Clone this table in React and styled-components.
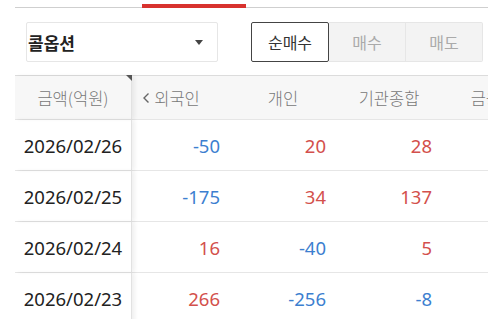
import React from 'react';
import styled, { createGlobalStyle } from 'styled-components';

const GlobalStyle = createGlobalStyle`
  html, body {
    margin: 0;
    padding: 0;
    background: #fff;
    overflow: hidden;
  }
  body {
    font-family: "Noto Sans", "Noto Sans CJK KR", sans-serif;
  }
`;

const Page = styled.div`
  width: 488px;
  height: 319px;
  overflow: hidden;
`;

const TabLine = styled.div`
  position: relative;
  margin-left: 15px;
  height: 7px;
  border-bottom: 1px solid #cfcfcf;
`;

const TabIndicator = styled.div`
  position: absolute;
  left: 127px;
  bottom: -1px;
  width: 104px;
  height: 4px;
  background: #d8322e;
`;

const Controls = styled.div`
  display: flex;
  align-items: center;
  padding: 14px 4px 0 26px;
  height: 40px;
`;

const Select = styled.div`
  box-sizing: border-box;
  width: 192px;
  height: 40px;
  display: flex;
  align-items: center;
  justify-content: space-between;
  padding: 0 14px 0 1px;
  border: 1px solid #e6e6e6;
  border-radius: 2px;
  font-family: "Noto Sans CJK KR", sans-serif;
  font-size: 17px;
  font-weight: 700;
  color: #222;
`;

const Caret = styled.span`
  width: 0;
  height: 0;
  border-left: 4px solid transparent;
  border-right: 4px solid transparent;
  border-top: 5px solid #444;
`;

const Segments = styled.div`
  display: flex;
  margin-left: 33px;
`;

const Segment = styled.div`
  box-sizing: border-box;
  width: ${p => (p.$first ? 78 : 77)}px;
  height: 40px;
  display: flex;
  align-items: center;
  justify-content: center;
  font-family: "Noto Sans CJK KR", sans-serif;
  font-size: 16px;
  font-weight: 400;
  color: ${p => (p.$active ? '#333' : '#aaa')};
  background: ${p => (p.$active ? '#fff' : '#f3f3f3')};
  border: 1px solid ${p => (p.$active ? '#444' : '#e6e6e6')};
  border-left-width: ${p => (p.$active || p.$first ? 1 : 0)}px;
  border-radius: ${p => (p.$active ? '2px' : p.$last ? '0 2px 2px 0' : '0')};
`;

const Table = styled.div`
  margin: 13px 0 0 15px;
  border-top: 1px solid #dcdcdc;
`;

const Row = styled.div`
  display: grid;
  grid-template-columns: 117px 106px 106px 106px 118px;
  height: ${p => (p.$head ? 43 : 50)}px;
  background: ${p => (p.$head ? '#f7f7f7' : '#fff')};
  border-bottom: 1px solid #e6e6e6;
`;

const FixedCell = styled.div`
  position: relative;
  display: flex;
  align-items: center;
  justify-content: center;
  font-family: ${p => (p.$head ? '"Noto Sans CJK KR", sans-serif' : '"Noto Sans", sans-serif')};
  font-size: ${p => (p.$head ? '16.5px' : '18.5px')};
  font-weight: ${p => (p.$head ? 300 : 400)};
  color: ${p => (p.$head ? '#777' : '#222')};
  border-right: 1px solid #e2e2e2;
  box-shadow: 3px 0 4px rgba(0, 0, 0, 0.06);
  z-index: 1;
`;

const Corner = styled.span`
  position: absolute;
  top: -1px;
  right: -1px;
  width: 0;
  height: 0;
  border-top: 6px solid #555;
  border-left: 6px solid transparent;
`;

const HeadCell = styled.div`
  position: relative;
  display: flex;
  align-items: center;
  justify-content: center;
  padding-right: 16px;
  font-family: "Noto Sans CJK KR", sans-serif;
  font-size: 16.5px;
  font-weight: 300;
  color: #777;
  white-space: nowrap;
`;

const PrevArrow = styled.svg`
  position: absolute;
  left: 10px;
  top: 50%;
  margin-top: -6px;
`;

const Value = styled.div`
  display: flex;
  align-items: center;
  justify-content: flex-end;
  padding-right: 18px;
  font-size: 18.5px;
  color: ${p => (p.$v < 0 ? '#3d7fd0' : '#d3504c')};
`;

const rows = [
  { date: '2026/02/26', vals: [-50, 20, 28] },
  { date: '2026/02/25', vals: [-175, 34, 137] },
  { date: '2026/02/24', vals: [16, -40, 5] },
  { date: '2026/02/23', vals: [266, -256, -8] },
];

export default function App() {
  return (
    <Page>
      <GlobalStyle />
      <TabLine>
        <TabIndicator />
      </TabLine>
      <Controls>
        <Select>
          콜옵션
          <Caret />
        </Select>
        <Segments>
          <Segment $active $first>순매수</Segment>
          <Segment>매수</Segment>
          <Segment $last>매도</Segment>
        </Segments>
      </Controls>
      <Table>
        <Row $head>
          <FixedCell $head>
            금액(억원)
            <Corner />
          </FixedCell>
          <HeadCell>
            <PrevArrow width="8" height="12" viewBox="0 0 8 12">
              <path d="M6.5 1.5 L2 6 L6.5 10.5" fill="none" stroke="#666" strokeWidth="1.4" />
            </PrevArrow>
            외국인
          </HeadCell>
          <HeadCell>개인</HeadCell>
          <HeadCell>기관종합</HeadCell>
          <HeadCell>금융투자</HeadCell>
        </Row>
        {rows.map(r => (
          <Row key={r.date}>
            <FixedCell>{r.date}</FixedCell>
            {r.vals.map((v, i) => (
              <Value key={i} $v={v}>{v < 0 ? `-${Math.abs(v)}` : v}</Value>
            ))}
            <Value $v={0} />
          </Row>
        ))}
      </Table>
    </Page>
  );
}
